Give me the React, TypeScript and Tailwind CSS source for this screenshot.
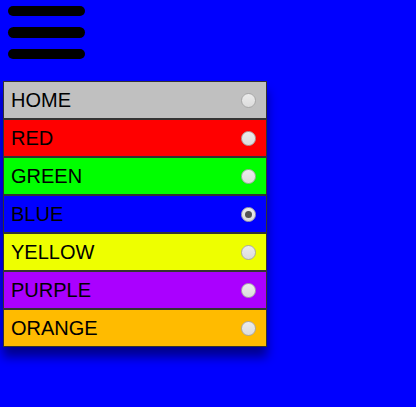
const items = [
  { label: 'HOME', bg: 'bg-[#c0c0c0]' },
  { label: 'RED', bg: 'bg-[#ff0000]' },
  { label: 'GREEN', bg: 'bg-[#00ff00]' },
  { label: 'BLUE', bg: 'bg-[#0000ff]', checked: true },
  { label: 'YELLOW', bg: 'bg-[#eeff00]' },
  { label: 'PURPLE', bg: 'bg-[#aa00ff]' },
  { label: 'ORANGE', bg: 'bg-[#ffbb00]' },
];

function Radio({ checked }: { checked?: boolean }) {
  return (
    <span className="w-[15px] h-[15px] rounded-full border border-[#a8a8a8] bg-gradient-to-b from-[#ececec] to-[#dcdcdc] flex items-center justify-center">
      {checked && <span className="w-[7px] h-[7px] rounded-full bg-[#555]" />}
    </span>
  );
}

export default function App() {
  return (
    <div className="w-[416px] h-[407px] bg-[#0000ff] overflow-hidden font-['Liberation_Sans',Arial,sans-serif]">
      {/* hamburger */}
      <div className="pt-[5.5px] pl-[8px] flex flex-col gap-[11px]">
        <div className="w-[77px] h-[10.5px] rounded-full bg-black" />
        <div className="w-[77px] h-[10.5px] rounded-full bg-black" />
        <div className="w-[77px] h-[10.5px] rounded-full bg-black" />
      </div>

      {/* menu */}
      <div className="mt-[22px] ml-[3px] w-[264px] border border-[#333] bg-[#333] flex flex-col gap-[2px] shadow-[0_10px_10px_rgba(0,0,0,0.45)]">
        {items.map((item) => (
          <div key={item.label} className={`${item.bg} h-[36px] flex items-center justify-between pl-[7px] pr-[10px]`}>
            <span className="text-[20px] text-black leading-none">{item.label}</span>
            <Radio checked={item.checked} />
          </div>
        ))}
      </div>
    </div>
  );
}
